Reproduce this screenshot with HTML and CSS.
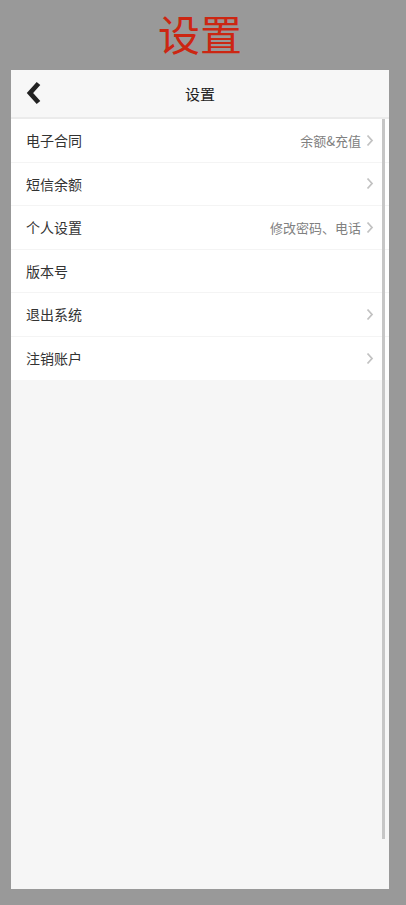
FILE: index.html
```html
<!DOCTYPE html>
<html lang="zh">
<head>
<meta charset="utf-8">
<title>设置</title>
<link rel="stylesheet" href="styles.css">
</head>
<body>
<h1 class="page-title">设置</h1>
<div class="phone">
  <header class="nav">
    <span class="back">
      <svg width="20" height="26" viewBox="0 0 20 26"><path d="M14.5 3.5 L6 13 L14.5 22.5" fill="none" stroke="#222" stroke-width="4.8" stroke-linecap="butt" stroke-linejoin="miter"/></svg>
    </span>
    <span class="nav-title">设置</span>
  </header>
  <ul class="list">
    <li class="row"><span class="label">电子合同</span><span class="extra">余额&amp;充值</span><span class="arrow"><svg width="8" height="13" viewBox="0 0 8 13"><path d="M1.5 1.5 L6 6.5 L1.5 11.5" fill="none" stroke="#c2c2c2" stroke-width="1.8"/></svg></span></li>
    <li class="row"><span class="label">短信余额</span><span class="extra"></span><span class="arrow"><svg width="8" height="13" viewBox="0 0 8 13"><path d="M1.5 1.5 L6 6.5 L1.5 11.5" fill="none" stroke="#c2c2c2" stroke-width="1.8"/></svg></span></li>
    <li class="row"><span class="label">个人设置</span><span class="extra">修改密码、电话</span><span class="arrow"><svg width="8" height="13" viewBox="0 0 8 13"><path d="M1.5 1.5 L6 6.5 L1.5 11.5" fill="none" stroke="#c2c2c2" stroke-width="1.8"/></svg></span></li>
    <li class="row"><span class="label">版本号</span></li>
    <li class="row"><span class="label">退出系统</span><span class="extra"></span><span class="arrow"><svg width="8" height="13" viewBox="0 0 8 13"><path d="M1.5 1.5 L6 6.5 L1.5 11.5" fill="none" stroke="#c2c2c2" stroke-width="1.8"/></svg></span></li>
    <li class="row last"><span class="label">注销账户</span><span class="extra"></span><span class="arrow"><svg width="8" height="13" viewBox="0 0 8 13"><path d="M1.5 1.5 L6 6.5 L1.5 11.5" fill="none" stroke="#c2c2c2" stroke-width="1.8"/></svg></span></li>
  </ul>
  <div class="scrollbar"></div>
</div>
</body>
</html>
```
FILE: styles.css
```css
* { box-sizing: border-box; }
html, body { margin: 0; padding: 0; }
body {
  background: #999999;
  font-family: "Noto Sans CJK SC", "Noto Sans", sans-serif;
  width: 406px;
  height: 905px;
  overflow: hidden;
}
.page-title {
  margin: 0;
  height: 70px;
  padding-top: 9px;
  width: 400px;
  text-align: center;
  font-size: 42px;
  line-height: 48px;
  font-weight: 400;
  color: #cc2612;
}
.phone {
  position: relative;
  margin-left: 11px;
  width: 378px;
  height: 819px;
  background: #f6f6f6;
}
.nav {
  height: 49px;
  background: #f7f7f7;
  border-bottom: 2px solid #ebebeb;
  display: flex;
  align-items: center;
  position: relative;
}
.back {
  position: absolute;
  left: 13px;
  top: 10px;
  display: flex;
}
.nav-title {
  flex: 1;
  text-align: center;
  font-size: 15px;
  color: #222;
}
.list {
  list-style: none;
  margin: 0;
  padding: 0;
  background: #fff;
}
.row {
  height: 43.5px;
  display: flex;
  align-items: center;
  padding-left: 15px;
  padding-right: 15px;
  border-bottom: 1px solid #f4f4f4;
  font-size: 14px;
  color: #333;
}
.row.last { border-bottom: none; }
.label { flex: 1; }
.extra {
  font-size: 13px;
  color: #808080;
  margin-right: 5px;
}
.arrow { display: flex; }
.scrollbar {
  position: absolute;
  right: 4px;
  top: 49px;
  width: 3px;
  height: 720px;
  background: #c6c6c6;
}
```
